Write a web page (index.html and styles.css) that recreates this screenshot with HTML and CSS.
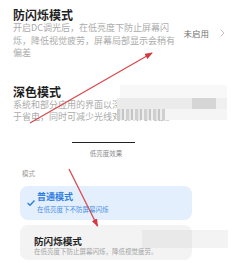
FILE: index.html
```html
<!DOCTYPE html>
<html lang="zh">
<head>
<meta charset="utf-8">
<link rel="stylesheet" href="styles.css">
</head>
<body>
  <section class="row">
    <div class="row-text">
      <div class="title">防闪烁模式</div>
      <div class="desc">开启DC调光后，在低亮度下防止屏幕闪<br>烁，降低视觉疲劳，屏幕局部显示会稍有<br>偏差</div>
    </div>
    <div class="value">
      <span>未启用</span>
      <svg class="chev" width="5" height="8" viewBox="0 0 5 8"><polyline points="0.7,0.7 4,4 0.7,7.3" fill="none" stroke="#c4c4c4" stroke-width="1"/></svg>
    </div>
  </section>

  <section class="row row-dark">
    <div class="row-text">
      <div class="title">深色模式</div>
      <div class="desc desc-tight">系统和部分应用的界面以深色显示，有助<br>于省电，同时可减少光线对眼睛的刺激。</div>
    </div>
    <div class="mosaic mosaic-a">
      <span class="m0"></span>
      <span class="m1"></span><span class="m2"></span><span class="m3"></span>
      <span class="m4"></span><span class="m5"></span>
    </div>
  </section>

  <section class="sheet">
    <div class="handle"></div>
    <div class="caption">低亮度效果</div>
    <div class="label">模式</div>
    <div class="card card-active">
      <svg class="check" width="8" height="6" viewBox="0 0 8 6"><polyline points="0.6,3 3,5.3 7.5,0.6" fill="none" stroke="#2f7de1" stroke-width="1.4"/></svg>
      <div>
        <div class="card-title">普通模式</div>
        <div class="card-sub">在低亮度下不防屏幕闪烁</div>
      </div>
    </div>
    <div class="card card-plain">
      <div>
        <div class="card-title">防闪烁模式</div>
        <div class="card-sub">在低亮度下防止屏幕闪烁，降低视觉疲劳。</div>
      </div>
      <div class="mosaic mosaic-b"><span class="n1"></span><span class="n2"></span></div>
    </div>
  </section>

  <svg class="arrows" width="243" height="263" viewBox="0 0 243 263">
    <defs>
      <marker id="head" markerWidth="8" markerHeight="6" refX="7" refY="3" orient="auto" markerUnits="userSpaceOnUse">
        <polygon points="0,0 8,3 0,6" fill="#d23a3f"/>
      </marker>
    </defs>
    <line x1="30" y1="123" x2="152" y2="53" stroke="#d9464b" stroke-width="1.2" marker-end="url(#head)"/>
    <line x1="69" y1="169" x2="97.5" y2="226" stroke="#d9464b" stroke-width="1.2" marker-end="url(#head)"/>
  </svg>
</body>
</html>
```

FILE: styles.css
```css
html, body {
  margin: 0;
  padding: 0;
}
body {
  width: 243px;
  height: 263px;
  overflow: hidden;
  position: relative;
  background: #ffffff;
  font-family: "Noto Sans CJK SC", "Noto Sans", sans-serif;
}

.row {
  display: flex;
  align-items: center;
  padding: 7px 18px 12px 13px;
}
.row-dark {
  padding: 12px 18px 0 13px;
}
.row-text {
  width: 163px;
}
.title {
  font-size: 12px;
  line-height: 15px;
  font-weight: 700;
  color: #1e1e1e;
}
.desc {
  font-size: 9px;
  line-height: 12.5px;
  color: #ababab;
  white-space: nowrap;
}
.desc-tight {
  line-height: 12px;
}
.value {
  margin-left: auto;
  display: flex;
  align-items: center;
  gap: 11px;
  font-size: 8.5px;
  color: #707070;
}

.mosaic {
  position: absolute;
}
.mosaic span {
  position: absolute;
  display: block;
}
.mosaic-a {
  left: 117px;
  top: 85px;
  width: 111px;
  height: 36px;
}
.mosaic-a .m0 { left: 3px; top: 0; width: 107px; height: 13px; background: #f8f8f8; }
.mosaic-a .m1 { left: 0; top: 13px; width: 75px; height: 11px; background: #ebebeb; }
.mosaic-a .m2 { left: 75px; top: 13px; width: 24px; height: 11px; background: #d6d6d6; }
.mosaic-a .m3 { left: 99px; top: 13px; width: 11px; height: 11px; background: #f0f0f0; }
.mosaic-a .m4 {
  left: 0; top: 24px; width: 48px; height: 11px;
  background: repeating-linear-gradient(90deg, #d0d0d0 0 3px, #e6e6e6 3px 5px, #c6c6c6 5px 7px, #efefef 7px 9px);
}
.mosaic-a .m5 { left: 48px; top: 24px; width: 62px; height: 11px; background: #f5f5f5; }

.sheet {
  width: 172px;
  margin-left: 12px;
  padding: 19px 8px 0;
}
.handle {
  width: 63px;
  height: 1.2px;
  margin-left: 52px;
  background: #222;
}
.caption {
  margin-top: 6px;
  font-size: 6.5px;
  line-height: 8px;
  text-align: center;
  color: #8a8a8a;
}
.label {
  margin: 12px 0 0 2px;
  font-size: 6.5px;
  line-height: 8px;
  color: #9a9a9a;
}
.card {
  display: flex;
  align-items: center;
  gap: 2px;
  border-radius: 8px;
}
.card-active {
  margin-top: 9px;
  padding: 5px 0 7px 7px;
  background: #e4effd;
}
.card-plain {
  margin-top: 5px;
  padding: 10px 0 5px 14px;
  background: #f3f3f3;
}
.check {
  flex: none;
  margin-top: 2px;
}
.card-title {
  font-size: 9px;
  line-height: 12px;
  font-weight: 700;
  color: #222;
}
.card-active .card-title {
  color: #2f7de1;
}
.card-plain .card-title {
  font-size: 9.6px;
}
.card-sub {
  margin-top: 2px;
  font-size: 6.5px;
  line-height: 8px;
  color: #a4a4a4;
  white-space: nowrap;
}
.card-active .card-sub {
  color: #4a8fe6;
}
.card-plain .card-sub {
  margin-top: 0;
}
.mosaic-b {
  left: 142px;
  top: 230px;
  width: 86px;
  height: 18px;
}
.mosaic-b .n1 { left: 0; top: 0; width: 50px; height: 18px; background: #e9e9e9; }
.mosaic-b .n2 { left: 50px; top: 0; width: 36px; height: 18px; background: #f3f3f3; }

.arrows {
  position: absolute;
  left: 0;
  top: 0;
  pointer-events: none;
}
```
